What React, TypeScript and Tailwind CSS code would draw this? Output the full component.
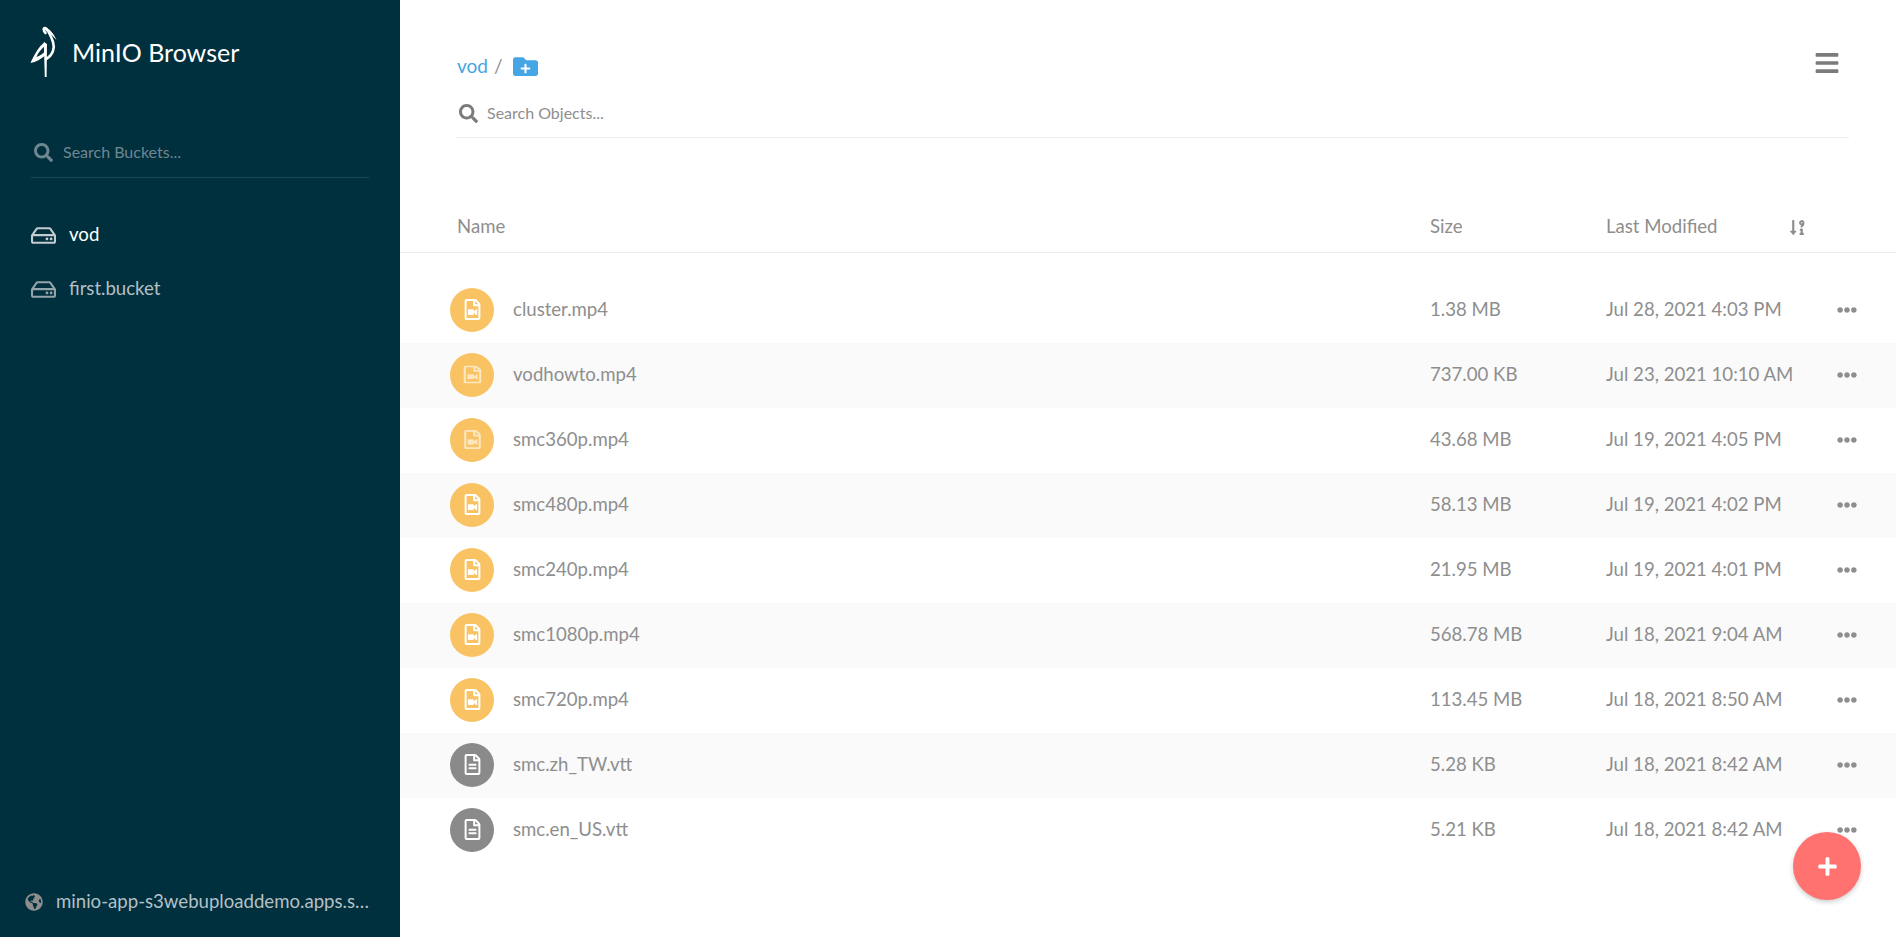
import { FaSearch, FaRegHdd, FaGlobeAmericas, FaBars, FaSortNumericDownAlt, FaEllipsisH, FaPlus, FaRegFileVideo, FaRegFileAlt, FaFolder } from "react-icons/fa";

const files = [
  { name: "cluster.mp4", size: "1.38 MB", date: "Jul 28, 2021 4:03 PM", type: "video", icon: "" },
  { name: "vodhowto.mp4", size: "737.00 KB", date: "Jul 23, 2021 10:10 AM", type: "video", icon: "opacity-60 scale-x-[1.12] scale-y-[0.86]" },
  { name: "smc360p.mp4", size: "43.68 MB", date: "Jul 19, 2021 4:05 PM", type: "video", icon: "opacity-60 scale-x-[1.05] scale-y-[0.92]" },
  { name: "smc480p.mp4", size: "58.13 MB", date: "Jul 19, 2021 4:02 PM", type: "video", icon: "" },
  { name: "smc240p.mp4", size: "21.95 MB", date: "Jul 19, 2021 4:01 PM", type: "video", icon: "" },
  { name: "smc1080p.mp4", size: "568.78 MB", date: "Jul 18, 2021 9:04 AM", type: "video", icon: "" },
  { name: "smc720p.mp4", size: "113.45 MB", date: "Jul 18, 2021 8:50 AM", type: "video", icon: "" },
  { name: "smc.zh_TW.vtt", size: "5.28 KB", date: "Jul 18, 2021 8:42 AM", type: "text", icon: "" },
  { name: "smc.en_US.vtt", size: "5.21 KB", date: "Jul 18, 2021 8:42 AM", type: "text", icon: "" },
];

function Logo() {
  return (
    <svg width="28" height="52" viewBox="10 11 28 52" className="shrink-0">
      {/* head and neck */}
      <path d="M25.5 18 C23 15 23.5 13 25 13 C27 13 31 21 33 27 C35 33 33 40 26 44" fill="none" stroke="#fff" strokeWidth="2.6" strokeLinecap="round" />
      <path d="M24 13 C29 12 34 19 36.5 25 C32 20 29 17 26 16 Z" fill="#fff" />
      {/* leg */}
      <path d="M23.8 27 L27 29 L26.6 62 L24.8 62 Z" fill="#fff" />
      {/* wing */}
      <path d="M25 27 C19 31 14 40 10.5 48 C16 47 21 44 26 40 L26 36 C22 39 20 41 16.5 42 C18 38 21 34 25 31 Z" fill="#fff" />
    </svg>
  );
}

export default function App() {
  return (
    <div className="flex h-screen overflow-hidden bg-white font-['Lato',sans-serif]">
      <aside className="flex w-[400px] shrink-0 flex-col bg-[#002f3e]">
        <div className="flex items-center gap-[14px] pl-[30px] pt-[26px]">
          <Logo />
          <span className="mt-[2px] text-[25px] text-white">MinIO Browser</span>
        </div>
        <div className="mx-[31px] mt-[59px] flex h-[41px] items-center gap-[10px] border-b border-[#1d4552] pl-[3px] pb-[10px]">
          <FaSearch className="text-[19px] text-[#6f8790]" />
          <span className="text-[16px] text-[#6f8790]">Search Buckets...</span>
        </div>
        <div className="mt-[30px] flex flex-col">
          <div className="flex h-[54px] items-center gap-[13px] pl-[31px] text-[18.6px] text-white">
            <FaRegHdd className="text-[25px] text-[#c3ccd0]" />
            vod
          </div>
          <div className="flex h-[54px] items-center gap-[13px] pl-[31px] text-[18.6px] text-[#b4c0c5]">
            <FaRegHdd className="text-[25px] text-[#95a4aa]" />
            first.bucket
          </div>
        </div>
        <div className="mt-auto flex items-center gap-[13px] pb-[21px] pl-[25px] text-[18.6px] text-[#b4c0c5]">
          <FaGlobeAmericas className="shrink-0 text-[18px] text-[#8e8e8e]" />
          <span className="w-[315px] truncate">minio-app-s3webuploaddemo.apps.smc.demo</span>
        </div>
      </aside>

      <main className="relative flex-1 text-[#8e8e8e]">
        <div className="ml-[56px] mr-[47px] border-b border-[#eee] pt-[50px] pb-[12px]">
          <div className="flex items-start justify-between">
            <div className="mt-[2px] flex h-[28px] items-center pl-[1px] text-[19px]">
              <span className="text-[#46a5e5]">vod</span>
              <span className="ml-[6px] text-[#8e8e8e]">/</span>
              <span className="relative ml-[10px] flex items-center justify-center">
                <FaFolder className="text-[25px] text-[#46a5e5]" />
                <FaPlus className="absolute top-[9px] text-[11px] text-white" />
              </span>
            </div>
            <FaBars className="mr-[9px] text-[26px] text-[#7b7b7b]" />
          </div>
          <div className="mt-[21px] flex h-[24px] items-center gap-[9px] pl-[3px]">
            <FaSearch className="text-[19px] text-[#7b7b7b]" />
            <span className="text-[16px]">Search Objects...</span>
          </div>
        </div>

        <div className="mt-[64px] flex h-[51px] items-center border-b border-[#eee] text-[18.6px]">
          <div className="w-[1030px] pl-[57px]">Name</div>
          <div className="w-[176px]">Size</div>
          <div className="w-[183px]">Last Modified</div>
          <FaSortNumericDownAlt className="text-[17px] text-[#8e8e8e]" />
        </div>

        <div className="mt-[25px]">
          {files.map((file, i) => (
            <div
              key={file.name}
              className={`flex h-[65px] items-center pb-[2px] text-[18.6px] ${i % 2 === 1 ? "bg-[#fafafa]" : ""}`}
            >
              <div className="flex w-[1030px] items-center gap-[19px] pl-[50px]">
                <div
                  className={`flex size-[44px] items-center justify-center rounded-full text-white ${
                    file.type === "video" ? "bg-[#f9c363]" : "bg-[#8a8a8a]"
                  }`}
                >
                  {file.type === "video" ? (
                    <FaRegFileVideo className={`text-[21px] ${file.icon}`} />
                  ) : (
                    <FaRegFileAlt className="text-[21px]" />
                  )}
                </div>
                <span>{file.name}</span>
              </div>
              <div className="w-[176px]">{file.size}</div>
              <div className="w-[231px]">{file.date}</div>
              <FaEllipsisH className="text-[20px] text-[#8e8e8e]" />
            </div>
          ))}
        </div>

        <div className="absolute right-[35px] bottom-[37px] flex size-[68px] items-center justify-center rounded-full bg-[#ff726f] shadow-[0_2px_5px_rgba(0,0,0,0.2)]">
          <FaPlus className="text-[21px] text-white" />
        </div>
      </main>
    </div>
  );
}
